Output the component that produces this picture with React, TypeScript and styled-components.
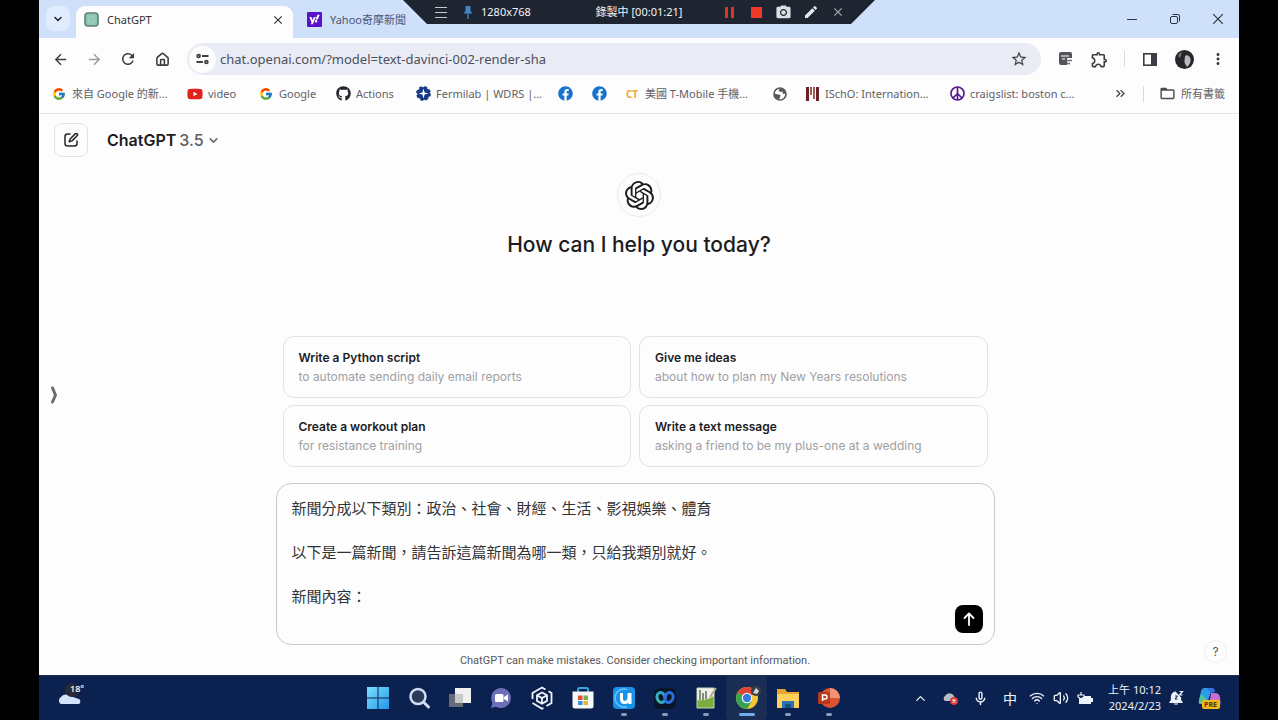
import React from "react";
import styled, { createGlobalStyle, css } from "styled-components";
import {
  MdArrowBack,
  MdArrowForward,
  MdRefresh,
  MdStarBorder,
  MdMoreVert,
  MdOutlineExtension,
  MdKeyboardDoubleArrowRight,
  MdFolderOpen,
  MdPhotoCamera,
  MdEdit,
  MdOutlineMicNone,
  MdClose,
} from "react-icons/md";
import { FaGithub, FaFacebook, FaYoutube, FaYahoo } from "react-icons/fa";
import { FcGoogle } from "react-icons/fc";
import { SiOpenai } from "react-icons/si";
import { ChevronDown, ChevronUp, Wifi, Volume2, Home } from "lucide-react";

const uiFont = `"Noto Sans", "Noto Sans CJK TC", sans-serif`;
const chatFont = `Inter, "Noto Sans CJK TC", sans-serif`;

const GlobalStyle = createGlobalStyle`
  *, *::before, *::after { box-sizing: border-box; }
  body { margin: 0; background: #000; font-family: ${uiFont}; }
  button, input, textarea { font: inherit; color: inherit; margin: 0; }
  button { padding: 0; border: 0; background: none; cursor: pointer; }
  svg { display: block; flex: none; }
`;

const Screen = styled.div`
  min-height: 100vh;
  padding: 0 39px;
  display: flex;
  flex-direction: column;
  position: relative;
`;

/* Recorder overlay */

const Recorder = styled.div`
  position: absolute;
  z-index: 2;
  top: 0;
  left: 50%;
  transform: translateX(-50%);
  width: 472px;
  height: 24px;
  padding: 0 24px;
  display: grid;
  grid-template-columns: 1fr auto 1fr;
  align-items: center;
  background: #1e2530;
  color: #f2f4f7;
  font-size: 11px;
  line-height: 16px;
  clip-path: polygon(0 0, 100% 0, calc(100% - 24px) 100%, 24px 100%);
`;

const RecorderGroup = styled.div<{ $end?: boolean }>`
  display: flex;
  align-items: center;
  justify-content: ${(p) => (p.$end ? "flex-end" : "flex-start")};
`;

const RecorderButton = styled.button`
  width: 27px;
  height: 24px;
  display: flex;
  align-items: center;
  justify-content: center;
`;

/* Browser chrome */

const TabStrip = styled.div`
  height: 38px;
  padding: 6px 0 0 7px;
  display: flex;
  background: #cfe0fa;
`;

const TabSearch = styled.button`
  width: 24px;
  height: 25px;
  margin-right: 6px;
  border-radius: 8px;
  background: #e0ebfd;
  color: #222;
  display: flex;
  align-items: center;
  justify-content: center;
`;

const Tab = styled.div<{ $active?: boolean }>`
  height: 32px;
  padding: 0 8px 5px;
  display: flex;
  align-items: center;
  gap: 8px;
  font-size: 11px;
  line-height: 16px;
  color: #4a5878;
  ${(p) =>
    p.$active &&
    css`
      width: 217px;
      margin-right: 6px;
      border-radius: 9px 9px 0 0;
      background: #fdfdfe;
      color: #333;
    `}
`;

const TabLabel = styled.span`
  flex: 1;
  white-space: nowrap;
`;

const WindowControls = styled.div`
  margin-left: auto;
  display: flex;
`;

const WindowButton = styled.button`
  width: 43px;
  height: 26px;
  display: flex;
  align-items: center;
  justify-content: center;
`;

const Toolbar = styled.div`
  height: 42px;
  padding: 0 4px;
  display: flex;
  align-items: center;
  background: #fdfdfe;
  color: #3c3d42;
`;

const ToolButton = styled.button<{ $dim?: boolean }>`
  width: 34px;
  height: 32px;
  display: flex;
  align-items: center;
  justify-content: center;
  opacity: ${(p) => (p.$dim ? 0.5 : 1)};
`;

const AddressBar = styled.form`
  flex: 1;
  height: 32px;
  margin: 0 7px 0 8px;
  padding: 0 5px 0 2px;
  display: flex;
  align-items: center;
  border-radius: 16px;
  background: #e9ecf5;
`;

const SiteInfo = styled.button`
  width: 27px;
  height: 27px;
  border-radius: 50%;
  background: #fdfdfe;
  display: flex;
  align-items: center;
  justify-content: center;
`;

const AddressInput = styled.input`
  flex: 1;
  min-width: 0;
  padding: 0 0 0 4px;
  border: 0;
  outline: 0;
  background: none;
  font-size: 13px;
  line-height: 20px;
  color: #4d4f5c;
`;

const Divider = styled.span<{ $wide?: boolean }>`
  width: 1px;
  height: 16px;
  margin: 0 ${(p) => (p.$wide ? 15 : 8)}px;
  background: #d5dbe6;
`;

const BookmarksBar = styled.nav`
  height: 34px;
  padding: 0 14px 6px 12px;
  display: flex;
  align-items: center;
  background: #fdfdfe;
  border-bottom: 1px solid #e4e5e8;
  font-size: 11px;
  line-height: 16px;
  color: #5f6166;
`;

const Bookmark = styled.a<{ $width?: number }>`
  width: ${(p) => (p.$width ? `${p.$width}px` : "auto")};
  display: flex;
  align-items: center;
  gap: 5px;
  color: inherit;
  text-decoration: none;
  white-space: nowrap;
`;

const BookmarkIcon = styled.span`
  width: 16px;
  height: 16px;
  display: flex;
  align-items: center;
  justify-content: center;
  flex: none;
`;

const BookmarksEnd = styled.div`
  margin-left: auto;
  display: flex;
  align-items: center;
`;

/* Chat page */

const ChatPage = styled.main`
  flex: 1;
  position: relative;
  display: flex;
  flex-direction: column;
  background: #fdfdfd;
  color: #1c1c1f;
  font-family: ${chatFont};
`;

const ChatHeader = styled.header`
  padding: 9px 15px 0;
  display: flex;
  align-items: center;
  gap: 19px;
`;

const NewChatButton = styled.button`
  width: 34px;
  height: 34px;
  border: 1px solid #e3e3e6;
  border-radius: 8px;
  display: flex;
  align-items: center;
  justify-content: center;
`;

const ModelButton = styled.button`
  display: flex;
  align-items: center;
  gap: 3px;
  font-size: 16px;
  line-height: 24px;
  font-weight: 600;
`;

const ModelVersion = styled.span`
  font-weight: 500;
  color: #5c5c61;
`;

const Hero = styled.section`
  flex: 1;
  padding-top: 16px;
  display: flex;
  flex-direction: column;
  align-items: center;
  gap: 12px;
`;

const LogoRing = styled.div`
  width: 44px;
  height: 44px;
  border: 1px solid #ececee;
  border-radius: 50%;
  display: flex;
  align-items: center;
  justify-content: center;
`;

const Headline = styled.h1`
  margin: 0;
  font-size: 21px;
  line-height: 32px;
  font-weight: 500;
`;

const Bottom = styled.section`
  width: 100%;
  max-width: 727px;
  margin: 0 auto;
  padding: 0 8px 6px 0;
`;

const Suggestions = styled.div`
  padding: 0 7px;
  margin-bottom: 16px;
  display: grid;
  grid-template-columns: 1fr 1fr;
  gap: 7px 8px;
`;

const Suggestion = styled.button`
  height: 62px;
  padding: 0 15px;
  border: 1px solid #e2e2e5;
  border-radius: 11px;
  text-align: left;
  font-size: 12px;
  line-height: 19px;
`;

const SuggestionTitle = styled.span`
  display: block;
  font-weight: 600;
`;

const SuggestionText = styled.span`
  display: block;
  color: #a0a0a4;
`;

const Composer = styled.form`
  height: 162px;
  padding: 14px 11px 11px 15px;
  display: flex;
  align-items: flex-end;
  border: 1px solid #c9c9cc;
  border-radius: 15px;
`;

const Prompt = styled.textarea`
  flex: 1;
  height: 100%;
  padding: 0;
  border: 0;
  outline: 0;
  resize: none;
  overflow: hidden;
  background: none;
  font-size: 15px;
  line-height: 22px;
  color: #333336;
`;

const SendButton = styled.button`
  width: 28px;
  height: 28px;
  border-radius: 8px;
  background: #000;
  display: flex;
  align-items: center;
  justify-content: center;
`;

const Disclaimer = styled.p`
  margin: 8px 0 0;
  text-align: center;
  font-family: Roboto, sans-serif;
  font-size: 11px;
  line-height: 16px;
  color: #58585d;
`;

const SideHandle = styled.button`
  position: absolute;
  left: 10px;
  top: 50%;
  transform: translateY(-50%);
`;

const HelpButton = styled.button`
  position: absolute;
  right: 12px;
  bottom: 12px;
  width: 23px;
  height: 23px;
  border: 1px solid #efeff1;
  border-radius: 50%;
  font-size: 12px;
  line-height: 16px;
  color: #55555a;
`;

/* Windows taskbar */

const Taskbar = styled.footer`
  height: 45px;
  display: flex;
  align-items: stretch;
  background: #0b2250;
  border-top: 1px solid #1b2c4d;
  color: #eef2fa;
`;

const Weather = styled.div`
  flex: 1;
  padding: 6px 0 0 17px;
`;

const Apps = styled.div`
  display: flex;
`;

const AppButton = styled.button<{ $mark?: "open" | "active" }>`
  width: 41px;
  display: flex;
  flex-direction: column;
  align-items: center;
  justify-content: flex-end;
  gap: 3px;
  padding-bottom: 4px;
  border-radius: 4px;
  background: ${(p) => (p.$mark === "active" ? "#1a2d55" : "none")};

  &::after {
    content: "";
    width: ${(p) => (p.$mark === "active" ? 16 : 6)}px;
    height: 3px;
    border-radius: 2px;
    background: ${(p) => (!p.$mark ? "transparent" : p.$mark === "active" ? "#6fb0ea" : "#8c9ab5")};
  }
`;

const Tray = styled.div`
  width: 390px;
  padding-right: 12px;
  display: flex;
  align-items: center;
  justify-content: flex-end;
`;

const trayWidths = { narrow: 24, normal: 30, wide: 36 };

const TrayItem = styled.button<{ $size?: keyof typeof trayWidths }>`
  width: ${(p) => trayWidths[p.$size ?? "normal"]}px;
  height: 40px;
  font-size: 14px;
  display: flex;
  align-items: center;
  justify-content: center;
`;

const Clock = styled.time`
  width: 64px;
  text-align: right;
  font-size: 11px;
  line-height: 16px;
  white-space: nowrap;
`;

/* Drawings */

const ChatFavicon = () => (
  <svg width="15" height="15" viewBox="0 0 15 15">
    <rect x="1" y="1" width="13" height="13" rx="3" fill="#8fc7b0" stroke="#5c7f78" strokeWidth="1.6" />
    <circle cx="7.5" cy="7.5" r="3.4" fill="none" stroke="#a6d3c1" />
  </svg>
);

const YahooFavicon = () => (
  <svg width="15" height="15" viewBox="0 0 15 15">
    <rect width="15" height="15" rx="1" fill="#5a12c8" />
    <g transform="translate(2 2)">
      <FaYahoo size={11} color="#fff" />
    </g>
  </svg>
);

const TuneIcon = () => (
  <svg width="13" height="12" viewBox="0 0 13 12" fill="none" stroke="#3f4046" strokeWidth="1.8">
    <circle cx="2.6" cy="3" r="1.4" />
    <path d="M6 3h6.5M.5 9H7" />
    <circle cx="10.4" cy="9" r="1.4" />
  </svg>
);

const FermilabIcon = () => (
  <svg width="15" height="15" viewBox="0 0 15 15">
    <circle cx="7.5" cy="7.5" r="6.4" fill="#173b86" stroke="#173b86" strokeWidth="2" strokeDasharray="3 2" />
    <path d="M7.5 2.5 8.6 6.4 12.5 7.5 8.6 8.6 7.5 12.5 6.4 8.6 2.5 7.5 6.4 6.4Z" fill="#fff" />
  </svg>
);

const GlobeIcon = () => (
  <svg width="14" height="14" viewBox="0 0 14 14">
    <circle cx="7" cy="7" r="6" fill="#fff" stroke="#55565b" strokeWidth="1.6" />
    <path d="M7 1.5 5.5 3.5 7.5 5 9.5 4.5 10 7 12.5 6.5A6 6 0 0 0 7 1.5ZM1.5 6.5 5 7.5 7.5 8 7 10.5 5.5 12.5A6 6 0 0 1 1.5 6.5Z" fill="#55565b" />
  </svg>
);

const BarsIcon = () => (
  <svg width="13" height="14" viewBox="0 0 13 14">
    <path d="M0 0h3v14H0ZM10 0h3v14h-3Z" fill="#6a2229" />
    <path d="M4 0h2v8H4ZM7 0h2v12H7Z" fill="#a05a55" />
  </svg>
);

const PeaceIcon = () => (
  <svg width="15" height="15" viewBox="0 0 15 15" fill="none" stroke="#551a8b" strokeWidth="1.7">
    <circle cx="7.5" cy="7.5" r="6.5" />
    <path d="M7.5 1v13M7.5 7.5 3 12M7.5 7.5 12 12" />
  </svg>
);

const CtIcon = styled.span`
  font-size: 10px;
  line-height: 16px;
  font-weight: 700;
  color: #e9a93c;
`;

const MailExtensionIcon = () => (
  <svg width="15" height="14" viewBox="0 0 15 14">
    <path d="M3 0h9a2 2 0 0 1 2 2v4H9v7H3a2 2 0 0 1-2-2V2a2 2 0 0 1 2-2Z" fill="#54555b" />
    <path d="M3 4h8M4 7h3" stroke="#c9cacf" strokeWidth="1.3" />
    <path d="M9 8.5h5M9 11.5h3" stroke="#6d6e74" strokeWidth="1.5" />
  </svg>
);

const SidePanelIcon = () => (
  <svg width="14" height="13" viewBox="0 0 14 13">
    <rect x=".8" y=".8" width="12.4" height="11.4" fill="none" stroke="#3c3d42" strokeWidth="1.6" />
    <path d="M8 1h5v11H8Z" fill="#3c3d42" />
  </svg>
);

const Avatar = () => (
  <svg width="19" height="19" viewBox="0 0 19 19">
    <circle cx="9.5" cy="9.5" r="9.5" fill="#25272b" />
    <path d="M10 6c2-2 5 0 5.5 3 .5 3-1 6-3.5 8-1-2-3-4-2.5-6Z" fill="#b9babd" />
    <path d="M3 6c1-2 2-3 4-4L5 8Z" fill="#77787c" />
  </svg>
);

const ComposeIcon = () => (
  <svg width="16" height="16" viewBox="0 0 16 16" fill="none" stroke="#26262a" strokeWidth="1.5" strokeLinecap="round" strokeLinejoin="round">
    <path d="M7 2H4.5C3 2 2 3 2 4.5v7C2 13 3 14 4.5 14h7c1.5 0 2.5-1 2.5-2.5V9" />
    <path d="M12.2 1.9a1.3 1.3 0 0 1 1.9 1.9L9 8.9l-2.8.9.9-2.8Z" />
  </svg>
);

const CloudIcon = () => (
  <svg width="28" height="24" viewBox="0 0 28 24">
    <path d="M5 22a4 4 0 0 1 0-7 6 6 0 0 1 9-1l9 3a3 3 0 0 1 0 5Z" fill="#d4e2fb" />
    <circle cx="16" cy="8" r="7" fill="#2a2a36" />
    <text x="14" y="10" fontSize="9" fontFamily="Open Sans, sans-serif" fontWeight="600" fill="#fff">
      18°
    </text>
  </svg>
);

const StartIcon = () => (
  <svg width="24" height="24" viewBox="0 0 24 24">
    <defs>
      <linearGradient id="start" x1="0" y1="0" x2="1" y2="1">
        <stop offset="0" stopColor="#7fe0fb" />
        <stop offset="1" stopColor="#1f97ec" />
      </linearGradient>
    </defs>
    <path d="M1 1h10.5v10.5H1ZM12.5 1H23v10.5H12.5ZM1 12.5h10.5V23H1ZM12.5 12.5H23V23H12.5Z" fill="url(#start)" />
  </svg>
);

const SearchIcon = () => (
  <svg width="24" height="24" viewBox="0 0 24 24">
    <circle cx="11" cy="10.5" r="7.5" fill="#2b3a5a" stroke="#cfdcf3" strokeWidth="2.5" />
    <path d="m16.5 16 5 5" stroke="#cfdcf3" strokeWidth="3" strokeLinecap="round" />
  </svg>
);

const TaskViewIcon = () => (
  <svg width="24" height="24" viewBox="0 0 24 24">
    <path d="M1 8h14v13H1Z" fill="#666b77" />
    <path d="M7 2h16v15H7Z" fill="#f0f0ee" />
    <path d="M7 8h8v9H7Z" fill="#c8cac9" />
  </svg>
);

const TeamsChatIcon = () => (
  <svg width="24" height="24" viewBox="0 0 24 24">
    <path d="M12 2a10 10 0 1 1-5 18.7L2 22l1.5-5A10 10 0 0 1 12 2Z" fill="#6d6fb8" />
    <rect x="6" y="8" width="8.5" height="8" rx="1.5" fill="#fff" />
    <path d="m15 11 4-2.5v7L15 13Z" fill="#fff" />
  </svg>
);

const CubeIcon = () => (
  <svg width="24" height="24" viewBox="0 0 24 24" fill="none" stroke="#f1f4fa" strokeWidth="1.8">
    <path d="M2.5 13V7L12 1.5 15.5 3.5M18.5 5.2 21.5 7v10l-5 3M13.5 22 12 22.7 2.5 17" />
    <path d="m12 6.5 5 2.8v5.6l-5 2.8-5-2.8V9.3ZM7 9.3l5 2.8 5-2.8M12 12v5.6" />
  </svg>
);

const StoreIcon = () => (
  <svg width="24" height="24" viewBox="0 0 24 24">
    <path d="M7 6V3.5Q7 2 8.5 2h7Q17 2 17 3.5V6" fill="none" stroke="#33a7dd" strokeWidth="2" />
    <path d="M1.5 5.5h21V20q0 2.5-2.5 2.5H4Q1.5 22.5 1.5 20Z" fill="#f7f8fa" />
    <path d="M7 9.5h4.5V14H7Z" fill="#d9513a" />
    <path d="M12.5 9.5H17V14h-4.5Z" fill="#7bb043" />
    <path d="M7 15h4.5v4H7Z" fill="#3a8fd8" />
    <path d="M12.5 15H17v4h-4.5Z" fill="#e9b33b" />
  </svg>
);

const UIcon = () => (
  <svg width="24" height="24" viewBox="0 0 24 24">
    <rect x="1" y="1" width="22" height="22" rx="4" fill="#1992ea" />
    <path d="M15 3.5A9 9 0 1 0 15 20.5" fill="none" stroke="#66c8f8" strokeWidth="1.5" />
    <path d="M9.5 7v6q0 3.5 3.2 3.5t4.3-3.5V7M18 7v11" fill="none" stroke="#fff" strokeWidth="3" />
  </svg>
);

const WebexIcon = () => (
  <svg width="24" height="24" viewBox="0 0 24 24" fill="none">
    <rect x="1" y="2" width="22" height="21" rx="6" fill="#0a1628" />
    <ellipse cx="8" cy="11.5" rx="4" ry="5" transform="rotate(-18 8 11.5)" stroke="#2aa5c4" strokeWidth="3" />
    <ellipse cx="16" cy="11.5" rx="4" ry="5" transform="rotate(18 16 11.5)" stroke="#2b6fe0" strokeWidth="3" />
    <path d="M4.5 8q-1 5 3 9" stroke="#4cc58f" strokeWidth="1.5" />
  </svg>
);

const NotepadIcon = () => (
  <svg width="24" height="24" viewBox="0 0 24 24">
    <path d="M3 2h17v20H3Z" fill="#eef1e8" />
    <path d="M3 14q9 1 17-4v12H3Z" fill="#7dae3d" />
    <path d="M6 4v10M9 7v7M12 5v8" stroke="#586258" strokeWidth="1.4" />
    <path d="m22 2-6 9" stroke="#b8a284" strokeWidth="2" />
    <path d="M3 2h17v20H3Z" fill="none" stroke="#c9d4b4" />
  </svg>
);

const ChromeIcon = () => (
  <svg width="28" height="24" viewBox="0 0 28 24">
    <g transform="translate(2 0)">
      <circle cx="12" cy="12" r="11" fill="#f4c531" />
      <path d="M12 12 2.5 6.5A11 11 0 0 1 21.5 6.5Z" fill="#df4435" />
      <path d="M2.5 6.5A11 11 0 0 0 12 23l5-8.5L12 12Z" fill="#35a351" />
      <circle cx="12" cy="12" r="5.3" fill="#fff" />
      <circle cx="12" cy="12" r="4.2" fill="#367be0" />
      <circle cx="21" cy="5" r="5" fill="#3a4048" />
      <path d="m18 7 3-5 3 3-2 3Z" fill="#d5d8da" />
    </g>
  </svg>
);

const FolderIcon = () => (
  <svg width="24" height="24" viewBox="0 0 24 24">
    <path d="M1 3h8l2 3h12v16H1Z" fill="#e8a72c" />
    <path d="M1 8h22v14H1Z" fill="#fbd15c" />
    <path d="M6 15h12v7H6Z" fill="#2b72b4" />
    <path d="M9 18h6v4H9Z" fill="#174f86" />
  </svg>
);

const PowerPointIcon = () => (
  <svg width="24" height="24" viewBox="0 0 24 24">
    <circle cx="13" cy="12" r="10" fill="#d9532f" />
    <path d="M13 2a10 10 0 0 1 10 10H13Z" fill="#f29272" />
    <rect x="1" y="6" width="12" height="12" rx="1.5" fill="#b8391c" />
    <path d="M5.5 15V9H8a2 2 0 0 1 0 4H5.5" fill="none" stroke="#fff" strokeWidth="1.5" />
  </svg>
);

const CloudAlertIcon = () => (
  <svg width="17" height="14" viewBox="0 0 17 14">
    <path d="M3 10a3 3 0 0 1 0-5 5 5 0 0 1 9 0l2 5Z" fill="#b7bcc8" />
    <circle cx="12" cy="10" r="4" fill="#d93a3a" />
    <path d="m10.5 8.5 3 3m0-3-3 3" stroke="#fff" strokeWidth="1.2" />
  </svg>
);

const BatteryIcon = () => (
  <svg width="17" height="13" viewBox="0 0 17 13">
    <path d="M2 4h12v8H2Z" fill="#eef2fa" />
    <path d="M14 6h2v4h-2Z" fill="#eef2fa" />
    <path d="M4 0v3M1 3h6v2L4 7 1 5Z" stroke="#eef2fa" strokeWidth="1.2" fill="#0b2250" />
  </svg>
);

const BellIcon = () => (
  <svg width="15" height="16" viewBox="0 0 15 16">
    <path d="M7 2a4.5 4.5 0 0 0-4.5 4.5V10L1 12.5h12L11.5 10V7M5 14h4" fill="#eef2fa" stroke="#eef2fa" strokeWidth="1.2" />
    <path d="M6 6h2.5L6 9h2.5" fill="none" stroke="#0b2250" strokeWidth="1" />
    <path d="M10.5 1.5H13.5L10.5 5h3" fill="none" stroke="#eef2fa" strokeWidth="1.2" />
  </svg>
);

const CopilotIcon = () => (
  <svg width="23" height="23" viewBox="0 0 23 23">
    <path d="M6 1h8l-4 13q-1 3-4 3H3q-3 0-2-3L3 4q1-3 3-3Z" fill="#2b9be8" />
    <path d="M9 1h5q3 0 3 4l-4 1Z" fill="#3a6fe0" />
    <path d="M1 13 3 7l6 6-2 4H3q-3 0-2-4Z" fill="#56c596" />
    <path d="M13 6h4q4 0 5 4l.5 6q0 4-4 4H8q3 0 3.5-4Z" fill="#c86dd7" />
    <path d="M13 12h9v6l-9 3Z" fill="#e9719b" />
    <rect x="4" y="13" width="18" height="9" rx="2" fill="#f3b71f" />
    <text x="6" y="20" fontSize="7" fontFamily="Open Sans, sans-serif" fontWeight="700" fill="#4a3208">
      PRE
    </text>
  </svg>
);

const bookmarks: { name: string; label?: string; width: number; icon: React.ReactNode }[] = [
  { name: "來自 Google 的新聞", label: "來自 Google 的新...", width: 136, icon: <FcGoogle size={14} /> },
  { name: "video", label: "video", width: 71, icon: <FaYoutube size={16} color="#e0231c" /> },
  { name: "Google", label: "Google", width: 77, icon: <FcGoogle size={14} /> },
  { name: "Actions", label: "Actions", width: 80, icon: <FaGithub size={15} color="#24262a" /> },
  { name: "Fermilab", label: "Fermilab | WDRS |...", width: 142, icon: <FermilabIcon /> },
  { name: "Facebook", width: 34, icon: <FaFacebook size={15} color="#1573cf" /> },
  { name: "Facebook", width: 33, icon: <FaFacebook size={15} color="#1573cf" /> },
  { name: "T-Mobile", label: "美國 T-Mobile 手機...", width: 148, icon: <CtIcon>CT</CtIcon> },
  { name: "Web", width: 32, icon: <GlobeIcon /> },
  { name: "ISchO", label: "ISchO: Internation...", width: 145, icon: <BarsIcon /> },
  { name: "craigslist", label: "craigslist: boston c...", width: 134, icon: <PeaceIcon /> },
];

const suggestions = [
  ["Write a Python script", "to automate sending daily email reports"],
  ["Give me ideas", "about how to plan my New Years resolutions"],
  ["Create a workout plan", "for resistance training"],
  ["Write a text message", "asking a friend to be my plus-one at a wedding"],
];

const apps: { name: string; icon: React.ReactNode; mark?: "open" | "active" }[] = [
  { name: "Start", icon: <StartIcon /> },
  { name: "Search", icon: <SearchIcon /> },
  { name: "Task view", icon: <TaskViewIcon /> },
  { name: "Chat", icon: <TeamsChatIcon /> },
  { name: "3D", icon: <CubeIcon /> },
  { name: "Store", icon: <StoreIcon /> },
  { name: "U", icon: <UIcon />, mark: "open" },
  { name: "Webex", icon: <WebexIcon />, mark: "open" },
  { name: "Notepad++", icon: <NotepadIcon />, mark: "open" },
  { name: "Chrome", icon: <ChromeIcon />, mark: "active" },
  { name: "Explorer", icon: <FolderIcon />, mark: "open" },
  { name: "PowerPoint", icon: <PowerPointIcon />, mark: "open" },
];

const promptText = `新聞分成以下類別：政治、社會、財經、生活、影視娛樂、體育

以下是一篇新聞，請告訴這篇新聞為哪一類，只給我類別就好。

新聞內容：`;

export default function App() {
  return (
    <Screen>
      <GlobalStyle />

      <Recorder>
        <RecorderGroup>
          <RecorderButton aria-label="Menu">
            <svg width="12" height="11" viewBox="0 0 12 11" stroke="#c5c9d0">
              <path d="M0 .5h12M0 5.5h12M0 10.5h12" />
            </svg>
          </RecorderButton>
          <RecorderButton aria-label="Pin">
            <svg width="10" height="14" viewBox="0 0 10 14">
              <path d="M2.5 1h5v5L9.5 8.5h-9L2.5 6ZM4.3 8h1.4v6H4.3Z" fill="#3f86c4" />
            </svg>
          </RecorderButton>
          <span>1280x768</span>
        </RecorderGroup>
        <span>錄製中 [00:01:21]</span>
        <RecorderGroup $end>
          <RecorderButton aria-label="Pause">
            <svg width="9" height="11" viewBox="0 0 9 11" fill="#dd3426">
              <path d="M0 0h3v11H0ZM6 0h3v11H6Z" />
            </svg>
          </RecorderButton>
          <RecorderButton aria-label="Stop">
            <svg width="11" height="11" viewBox="0 0 11 11">
              <path d="M0 0h11v11H0Z" fill="#ee3a26" />
            </svg>
          </RecorderButton>
          <RecorderButton aria-label="Capture">
            <MdPhotoCamera size={17} color="#dcdfe3" />
          </RecorderButton>
          <RecorderButton aria-label="Draw">
            <MdEdit size={16} color="#e6e8eb" />
          </RecorderButton>
          <RecorderButton aria-label="Close recorder">
            <MdClose size={14} color="#a5aab2" />
          </RecorderButton>
        </RecorderGroup>
      </Recorder>

      <TabStrip>
        <TabSearch aria-label="Search tabs">
          <ChevronDown size={12} strokeWidth={3} />
        </TabSearch>
        <Tab $active>
          <ChatFavicon />
          <TabLabel>ChatGPT</TabLabel>
          <button aria-label="Close tab">
            <MdClose size={14} />
          </button>
        </Tab>
        <Tab>
          <YahooFavicon />
          <TabLabel>Yahoo奇摩新聞</TabLabel>
        </Tab>
        <WindowControls>
          <WindowButton aria-label="Minimize">
            <svg width="10" height="10" viewBox="0 0 10 10" stroke="#2b3342">
              <path d="M0 5.5h10" />
            </svg>
          </WindowButton>
          <WindowButton aria-label="Restore">
            <svg width="10" height="10" viewBox="0 0 10 10" fill="none" stroke="#2b3342">
              <rect x=".5" y="2.5" width="7" height="7" rx="1.5" />
              <path d="M2.5.5H8Q9.5.5 9.5 2v5.5" />
            </svg>
          </WindowButton>
          <WindowButton aria-label="Close">
            <svg width="10" height="10" viewBox="0 0 10 10" stroke="#2b3342" strokeWidth="1.2">
              <path d="m0 0 10 10M10 0 0 10" />
            </svg>
          </WindowButton>
        </WindowControls>
      </TabStrip>

      <Toolbar>
        <ToolButton aria-label="Back">
          <MdArrowBack size={17} />
        </ToolButton>
        <ToolButton aria-label="Forward" $dim>
          <MdArrowForward size={17} />
        </ToolButton>
        <ToolButton aria-label="Reload">
          <MdRefresh size={18} />
        </ToolButton>
        <ToolButton aria-label="Home">
          <Home size={15} strokeWidth={2.5} />
        </ToolButton>
        <AddressBar>
          <SiteInfo type="button" aria-label="Site information">
            <TuneIcon />
          </SiteInfo>
          <AddressInput aria-label="Address" defaultValue="chat.openai.com/?model=text-davinci-002-render-sha" />
          <ToolButton type="button" aria-label="Bookmark this page">
            <MdStarBorder size={18} />
          </ToolButton>
        </AddressBar>
        <ToolButton aria-label="Mail extension">
          <MailExtensionIcon />
        </ToolButton>
        <ToolButton aria-label="Extensions">
          <MdOutlineExtension size={19} />
        </ToolButton>
        <Divider />
        <ToolButton aria-label="Side panel">
          <SidePanelIcon />
        </ToolButton>
        <ToolButton aria-label="Profile">
          <Avatar />
        </ToolButton>
        <ToolButton aria-label="Browser menu">
          <MdMoreVert size={18} />
        </ToolButton>
      </Toolbar>

      <BookmarksBar>
        {bookmarks.map((b, i) => (
          <Bookmark key={i} href="#" aria-label={b.name} $width={b.width}>
            <BookmarkIcon>{b.icon}</BookmarkIcon>
            {b.label}
          </Bookmark>
        ))}
        <BookmarksEnd>
          <MdKeyboardDoubleArrowRight size={15} color="#3c3d42" />
          <Divider $wide />
          <Bookmark href="#">
            <MdFolderOpen size={17} color="#4b4c51" />
            所有書籤
          </Bookmark>
        </BookmarksEnd>
      </BookmarksBar>

      <ChatPage>
        <ChatHeader>
          <NewChatButton aria-label="New chat">
            <ComposeIcon />
          </NewChatButton>
          <ModelButton>
            ChatGPT <ModelVersion>3.5</ModelVersion>
            <ChevronDown size={13} strokeWidth={3} color="#6b6b70" />
          </ModelButton>
        </ChatHeader>

        <Hero>
          <LogoRing>
            <SiOpenai size={29} />
          </LogoRing>
          <Headline>How can I help you today?</Headline>
        </Hero>

        <Bottom>
          <Suggestions>
            {suggestions.map(([title, text]) => (
              <Suggestion key={title}>
                <SuggestionTitle>{title}</SuggestionTitle>
                <SuggestionText>{text}</SuggestionText>
              </Suggestion>
            ))}
          </Suggestions>
          <Composer>
            <Prompt aria-label="Message ChatGPT" defaultValue={promptText} />
            <SendButton type="button" aria-label="Send message">
              <svg width="14" height="14" viewBox="0 0 14 14" fill="none" stroke="#fff" strokeWidth="1.8" strokeLinecap="round" strokeLinejoin="round">
                <path d="M7 13V1.5M2.5 6 7 1.5 11.5 6" />
              </svg>
            </SendButton>
          </Composer>
          <Disclaimer>ChatGPT can make mistakes. Consider checking important information.</Disclaimer>
        </Bottom>

        <SideHandle aria-label="Open sidebar">
          <svg width="9" height="20" viewBox="0 0 9 20" fill="none" stroke="#6a6a6f" strokeWidth="3" strokeLinecap="round" strokeLinejoin="round">
            <path d="m3.5 3 3 7-3 7" />
          </svg>
        </SideHandle>
        <HelpButton>?</HelpButton>
      </ChatPage>

      <Taskbar>
        <Weather>
          <CloudIcon />
        </Weather>
        <Apps>
          {apps.map((a) => (
            <AppButton key={a.name} aria-label={a.name} $mark={a.mark}>
              {a.icon}
            </AppButton>
          ))}
        </Apps>
        <Tray>
          <TrayItem aria-label="Hidden icons">
            <ChevronUp size={15} />
          </TrayItem>
          <TrayItem aria-label="OneDrive">
            <CloudAlertIcon />
          </TrayItem>
          <TrayItem aria-label="Microphone">
            <MdOutlineMicNone size={17} />
          </TrayItem>
          <TrayItem>中</TrayItem>
          <TrayItem aria-label="Network" $size="narrow">
            <Wifi size={16} />
          </TrayItem>
          <TrayItem aria-label="Volume" $size="narrow">
            <Volume2 size={16} />
          </TrayItem>
          <TrayItem aria-label="Battery" $size="narrow">
            <BatteryIcon />
          </TrayItem>
          <Clock>
            上午 10:12
            <br />
            2024/2/23
          </Clock>
          <TrayItem aria-label="Notifications">
            <BellIcon />
          </TrayItem>
          <TrayItem aria-label="Copilot" $size="wide">
            <CopilotIcon />
          </TrayItem>
        </Tray>
      </Taskbar>
    </Screen>
  );
}
